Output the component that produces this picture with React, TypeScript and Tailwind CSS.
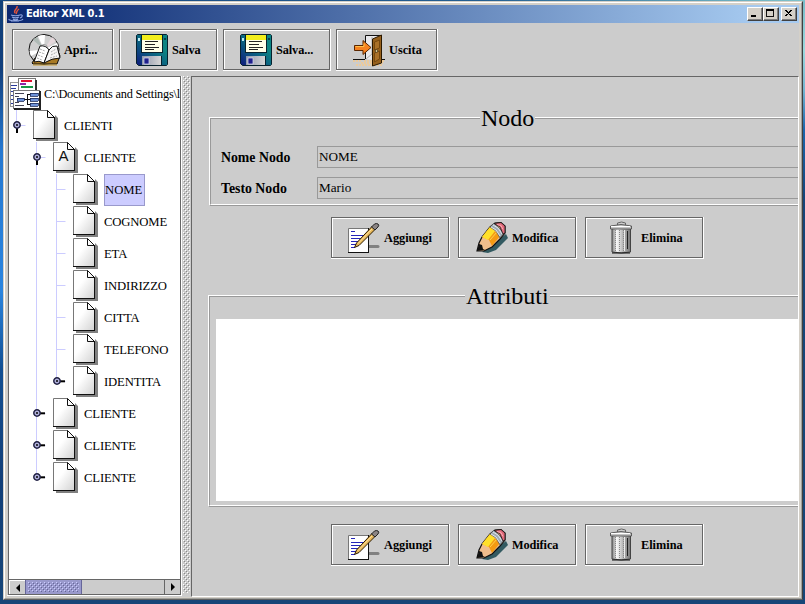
import React from 'react';

type IconProps = { className?: string };

const ICON = 'h-8 w-8 shrink-0 overflow-visible';

function JavaIcon() {
  return (
    <svg viewBox="0 0 16 16" className="h-4 w-4 shrink-0">
      <path d="M9 0C10 3 5 4 7 7M11 3C8 5 9 6 8 8" fill="none" stroke="#e2553d" strokeWidth="1.5" />
      <path d="M3 9c2 1 7 1 9 0M12 9c3-1 3 2 0 3M4 11c2 1 5 1 7 0M5 13c1 1 4 1 5 0M1 13c-1 2 12 3 14 0M3 15h8" fill="none" stroke="#8fa5e0" strokeWidth="1.1" />
    </svg>
  );
}

function OpenIcon() {
  return (
    <svg viewBox="0 0 32 32" className={ICON}>
      <circle cx="16" cy="15.5" r="15" fill="#cfcfcf" stroke="#111" />
      <path d="M16 15.5L10 2A15 15 0 0 1 17 1zM16 15.5L29 9A15 15 0 0 1 30.500 14zM16 15.500L3 22A15 15 0 0 1 1.500 17z" fill="#fff" />
      <path d="M16 15.500L5 6A14 14 0 0 1 9 3z" fill="#aeb9b5" />
      <path d="M16 15.500L24 3A14 14 0 0 1 28 7z" fill="#e6d8dc" />
      <circle cx="16" cy="14" r="3.500" fill="#eee" stroke="#999" />
      <path d="M4 29l3-5 13-2 11-3 1 3-3 8H5z" fill="#a87a24" stroke="#111" />
      <path d="M12 12q6-1 9 4l-5 13q-5-3-10-1z" fill="#fff" stroke="#111" />
      <path d="M21 16q3-5 8-4l3 12q-8 0-16 5z" fill="#f6f6f6" stroke="#111" />
      <path d="M12 15l5 2M11 18l6 2M10 21l5 2M9 24l5 2M23 18l5-3M23 21l6-3M22 24l7-2" stroke="#aaa" fill="none" strokeDasharray="2 1" />
      <path d="M5 31h24" stroke="#c99a2e" />
    </svg>
  );
}

function FloppyIcon() {
  return (
    <svg viewBox="0 0 32 32" className={ICON}>
      <defs>
        <linearGradient id="disk" x1="0" y1="1" x2="0.7" y2="0.3">
          <stop offset="0" stopColor="#10187c" />
          <stop offset="0.5" stopColor="#0b5580" />
          <stop offset="1" stopColor="#0c8483" />
        </linearGradient>
        <linearGradient id="shutter">
          <stop offset="0" stopColor="#8f98ac" />
          <stop offset="1" stopColor="#d5d5d5" />
        </linearGradient>
      </defs>
      <path d="M1.500 .5h29l1 1v29l-1 1h-28l-2-2v-28z" fill="url(#disk)" stroke="#07222e" />
      <rect x="5" y="1" width="22" height="18" fill="#07222e" />
      <rect x="6" y="1" width="20" height="5" fill="#f2ee1c" />
      <rect x="6" y="6" width="20" height="12" fill="#ffffe8" />
      <path d="M9 7.500h13M9 10.500h10M9 13.500h14M9 15.500h9" stroke="#222" />
      <rect x="2" y="4" width="2" height="3" fill="#bfeaf0" />
      <rect x="28" y="4" width="2" height="2" fill="#063f50" />
      <path d="M6 22h19v9H6z" fill="url(#shutter)" />
      <rect x="8" y="24" width="5" height="6" fill="#20208c" stroke="#dfe3f4" strokeWidth=".7" />
      <path d="M25.500 22v9" stroke="#07222e" />
    </svg>
  );
}

function ExitIcon() {
  return (
    <svg viewBox="0 0 32 32" className={ICON}>
      <path d="M11 27h21M8 29h22M0 27h9M3 31h26" stroke="#f5c98c" strokeWidth="1.500" strokeDasharray="2 1" />
      <path d="M0 25.500h12M28 25.500h4" stroke="#111" />
      <path d="M12.500 25V1.500h16V27" fill="#e9e9ec" stroke="#111" />
      <path d="M13 25l6-5V3" fill="none" stroke="#aaa" />
      <path d="M1.500 11.500H10v-5l8 7-8 7v-4H1.500z" fill="#f58220" stroke="#5a2600" />
      <path d="M2.500 12.500H11v-3" fill="none" stroke="#ffc04a" />
      <path d="M19.500 5l9-4v28l-9 3z" fill="#96601c" stroke="#2a1800" />
      <path d="M21.500 8l5-2v8l-5 2zM21.500 19l5-2v8l-5 3z" fill="#a97028" stroke="#74470f" />
      <circle cx="23.500" cy="17" r="1.200" fill="#ffe79a" stroke="#222" strokeWidth=".6" />
    </svg>
  );
}

function AddIcon() {
  return (
    <svg viewBox="0 0 32 32" className={ICON}>
      <path d="M21 24.500h10" stroke="#808080" strokeWidth="3" strokeLinecap="round" />
      <path d="M1.500 6.500h20v24h-20z" fill="#fff" stroke="#777" />
      <path d="M1 30.500h21M21.500 6v25" stroke="#111" />
      <path d="M4 9.500h4M4 13.500h14M4 16.500h12M4 19.500h11M4 22.500h8M4 25.500h4" stroke="#2424b8" />
      <path d="M7.500 25.500l2-4.500L25 4.500l3 3L12 23.500z" fill="#e8b85a" stroke="#2b1a00" />
      <path d="M11 21.500L25.500 6.500" stroke="#ffe3a0" />
      <path d="M24.500 5l3-3q2-1 3.500 0t0 3L28 8z" fill="#8b8585" stroke="#222" />
    </svg>
  );
}

function EditIcon() {
  return (
    <svg viewBox="0 0 32 32" className={ICON}>
      <path d="M6 30l6 1 8-3 12-12-2-4z" fill="#335a61" />
      <path d="M1 29l2-8 3-6L14 5l5-4 6-.5 4 3.500v7l-5 6-8 8-8 4z" fill="#f0bd8c" stroke="#111" strokeWidth="1.200" />
      <path d="M6 15l8-10 10 9-8 10-3-6z" fill="#f59a12" />
      <path d="M6 15l8-10 5 4-7 9z" fill="#ffe02a" />
      <path d="M14 18l7-8" stroke="#ffd34b" />
      <path d="M14 5l4-4 10 10-4 5-4-7z" fill="#9fabb5" stroke="#444" strokeWidth=".6" />
      <path d="M15 5l5 3 4 6M17 3l5 3 4 6" fill="none" stroke="#e9eef2" strokeWidth=".9" />
      <path d="M18 1.500l7-1 4 3.500v7l-2 1-3-7z" fill="#e2697a" stroke="#111" strokeWidth=".8" />
      <path d="M21 2.500l4 1 2 4" stroke="#f8aab3" fill="none" />
      <path d="M1 29l2-7 3 1 1 4 2 1z" fill="#111" />
    </svg>
  );
}

function TrashIcon() {
  return (
    <svg viewBox="0 0 32 32" className={ICON}>
      <defs>
        <linearGradient id="can">
          <stop offset="0" stopColor="#888" />
          <stop offset="0.3" stopColor="#f2f2f2" />
          <stop offset="0.6" stopColor="#b4b4b4" />
          <stop offset="1" stopColor="#777" />
        </linearGradient>
      </defs>
      <path d="M12.500 3V1q4-2 8 0v2" fill="none" stroke="#666" />
      <path d="M7 6h18.500v24q-9 2-18.500 0z" fill="url(#can)" stroke="#444" />
      <path d="M10.500 8v21M14.500 8v21M18.500 8v21" stroke="#888" strokeDasharray="1 1" />
      <path d="M11.500 8v21M19.500 8v21" stroke="#fff" strokeWidth=".8" />
      <path d="M22.500 9v18" stroke="#222" />
      <path d="M5.500 4q10.500-3 21 0v3h-21z" fill="#c4c4c4" stroke="#444" strokeWidth=".8" />
      <path d="M6 4.500h19" stroke="#fff" />
      <path d="M7 31h18" stroke="#111" fill="none" />
    </svg>
  );
}

function RootIcon() {
  return (
    <svg viewBox="0 0 32 32" className={ICON} shapeRendering="crispEdges">
      <path d="M1 4h10v24H1z" fill="#fff" stroke="#999" />
      <path d="M2 7.500h6M2 10.500h5M2 13.500h6M2 17.500h4M2 21.500h4M2 25.500h4" stroke="#2b3c9c" />
      <path d="M9.500 .5h17v14h-17z" fill="#fff" stroke="#777" />
      <path d="M27 2v12" stroke="#333" strokeWidth="2" />
      <path d="M12 3h11" stroke="#e01030" strokeWidth="2" />
      <path d="M11 6h6" stroke="#9028a8" strokeWidth="2" />
      <path d="M12 9h12" stroke="#189848" strokeWidth="2" />
      <path d="M4.500 12.500h26v18h-26z" fill="#fff" stroke="#777" />
      <path d="M5 31h27M31 13v18" stroke="#222" strokeWidth="2" />
      <path d="M6 15.500h9M6 18.500h4M6 24.500h4M6 27.500h9" stroke="#445" />
      <path d="M15 21.500h3M18.500 16v11M18 16.500h3M18 21.500h3M18 26.500h3" stroke="#111" fill="none" />
      <path d="M8 20h7v3H8zM21 15h8v3h-8zM21 20h8v3h-8zM21 25h8v3h-8z" fill="#6f93d8" stroke="#1b2b58" strokeWidth=".8" />
    </svg>
  );
}

function DocIcon({ letter }: { letter?: string }) {
  return (
    <svg viewBox="0 0 31 32" className="h-8 w-[31px] shrink-0">
      <defs>
        <linearGradient id="page" x1="0" y1="0" x2="1" y2="1">
          <stop offset="0.4" stopColor="#fff" />
          <stop offset="1" stopColor="#d2d2d2" />
        </linearGradient>
      </defs>
      <path d="M3 29h19V5l3 3v23H3z" fill="#808080" />
      <path d="M.5 .5h14l7 7v21H.5z" fill="url(#page)" stroke="#777" />
      <path d="M0 28.500h22M21.500 7v22M14.500 .5v7h7M14.500 .5l7 7" fill="none" stroke="#111" />
      {letter && (
        <text x="10.500" y="19" textAnchor="middle" fontSize="15" fontFamily="Liberation Sans, sans-serif" fill="#111">
          {letter}
        </text>
      )}
    </svg>
  );
}

type Node = { name: string; depth: number; handle?: 'open' | 'closed'; letter?: string; selected?: boolean; last?: boolean };

const NODES: Node[] = [
  { name: 'CLIENTI', depth: 1, handle: 'open' },
  { name: 'CLIENTE', depth: 2, handle: 'open', letter: 'A' },
  { name: 'NOME', depth: 3, selected: true },
  { name: 'COGNOME', depth: 3 },
  { name: 'ETA', depth: 3 },
  { name: 'INDIRIZZO', depth: 3 },
  { name: 'CITTA', depth: 3 },
  { name: 'TELEFONO', depth: 3 },
  { name: 'IDENTITA', depth: 3, handle: 'closed', last: true },
  { name: 'CLIENTE', depth: 2, handle: 'closed' },
  { name: 'CLIENTE', depth: 2, handle: 'closed' },
  { name: 'CLIENTE', depth: 2, handle: 'closed', last: true },
];

function Gutter({ node }: { node: Node }) {
  const width = node.depth * 20 + 4;
  const x = node.depth * 20 - 12.5;
  const end = node.last || node.depth === 1 ? 15 : 32;
  return (
    <svg width={width} height="32" className="shrink-0">
      <g stroke="#ccccff">
        {node.depth === 3 && <path d="M27.5 0V32" />}
        <path d={`M${x} 0V${end}M${x} 15.5H${x + 9}`} fill="none" />
      </g>
      {node.handle && (
        <g transform={`translate(${x + 0.5} 15)`}>
          {node.handle === 'open' ? (
            <path d="M0 3V8" stroke="#000" strokeWidth="2" />
          ) : (
            <path d="M3 .3H8" stroke="#000" strokeWidth="2" />
          )}
          <circle r="3.200" fill="#b4b4e0" stroke="#222244" strokeWidth="1.500" />
          <circle r="1.100" fill="#111" />
        </g>
      )}
    </svg>
  );
}

function TreeRow({ node }: { node: Node }) {
  return (
    <div className="flex h-8 shrink-0 items-center whitespace-nowrap">
      <Gutter node={node} />
      <DocIcon letter={node.letter} />
      <span
        className={
          node.selected
            ? 'flex h-8 w-[41px] items-center border border-[#9999cc] bg-[#ccccff] pt-px'
            : 'flex h-8 items-center pt-px tracking-[-0.15px]'
        }
      >
        {node.name}
      </span>
    </div>
  );
}

function Bumps({ id, dark, light, className }: { id: string; dark: string; light: string; className: string }) {
  return (
    <svg className={className} shapeRendering="crispEdges">
      <defs>
        <pattern id={id} width="4" height="4" patternUnits="userSpaceOnUse">
          <path d="M0 0h1v1h-1zM2 2h1v1h-1z" fill={light} />
          <path d="M1 1h1v1h-1zM3 3h1v1h-1z" fill={dark} />
        </pattern>
      </defs>
      <rect width="100%" height="100%" fill={`url(#${id})`} />
    </svg>
  );
}

function MetalButton({ icon, label, className }: { icon: React.ReactNode; label: string; className: string }) {
  return (
    <button className="flex h-[42px] shrink-0 border-r border-b border-white">
      <span className="flex border border-[#666666]">
        <span
          className={`flex h-[39px] items-center border-t border-l border-white text-left text-[12.3px] font-bold whitespace-nowrap ${className}`}
        >
          {icon}
          <span>{label}</span>
        </span>
      </span>
    </button>
  );
}

function ButtonRow({ className }: { className: string }) {
  return (
    <div className={`flex gap-2 pl-[139px] ${className}`}>
      <MetalButton icon={<AddIcon />} label="Aggiungi" className="w-[116px] gap-[5px] pl-[14px]" />
      <MetalButton icon={<EditIcon />} label="Modifica" className="w-[116px] gap-1 pl-4 tracking-[-0.1px]" />
      <MetalButton icon={<TrashIcon />} label="Elimina" className="w-[116px] gap-1 pl-[18px]" />
    </div>
  );
}

function Group({ title, className, titleClass, children }: { title: string; className: string; titleClass: string; children: React.ReactNode }) {
  return (
    <section className={`relative border-t border-b border-l border-white border-b-[#999999] ${className}`}>
      <div className="h-full border-t border-b border-l border-[#999999] border-b-white">{children}</div>
      <h2 className={`absolute -top-[14px] bg-[#cccccc] px-px text-[24px] leading-[29px] whitespace-nowrap ${titleClass}`}>{title}</h2>
    </section>
  );
}

function Field({ label, value }: { label: string; value: string }) {
  return (
    <div className="flex h-[22px] items-center">
      <label className="w-24 shrink-0 pt-[2px] text-[13.8px] font-bold">{label}</label>
      <div className="flex h-[22px] flex-1 items-center border border-r-0 border-[#999999] pl-px text-[13.2px]">{value}</div>
    </div>
  );
}

function WinButton({ children, className }: { children: React.ReactNode; className?: string }) {
  return (
    <div className={`h-[14px] w-4 border border-white border-r-[#404040] border-b-[#404040] bg-[#d4d0c8] ${className ?? ''}`}>
      <svg viewBox="0 0 14 12" className="h-3 w-[14px] border-r border-b border-[#808080]" shapeRendering="crispEdges">
        {children}
      </svg>
    </div>
  );
}

export default function App() {
  return (
    <div className="h-[604px] w-[805px] overflow-hidden bg-[linear-gradient(to_bottom,#124078_0px,#12407c_70px,#2678d0_150px,#2b85df_290px,#124f92_370px,#123f78_480px,#174678_604px)] font-['Liberation_Serif',serif] text-black">
      <div className="flex h-[604px] bg-[linear-gradient(to_bottom,#78bcc8_0px,#9cd8dc_50px,#74b5d0_90px,#1b65ac_130px,#154579_200px,#174678_604px)] bg-[length:3px_604px] bg-right bg-no-repeat">
        <div className="h-[604px] w-full bg-[linear-gradient(to_right,#174880,#235e90_60%,#80c4cc)] bg-[length:805px_1px] bg-no-repeat pt-px pl-[3px]">
          <main className="flex h-[599px] w-[800px] flex-col border border-[#d4d0c8] border-r-[#404040] border-b-[#606060] bg-[#d4d0c8]">
            <div className="flex min-h-0 flex-1 flex-col border border-white border-r-[#a0a09c] border-b-[#a0a09c] p-[2px] pb-[1px]">
              <header className="flex h-[18px] shrink-0 items-center bg-[linear-gradient(to_right,#0c2870,#16357b_10%,#a6caf0_95%)] pr-[2px] pl-px">
                <JavaIcon />
                <h1 className="flex-1 pt-px pl-[2px] font-['DejaVu_Sans_Condensed','DejaVu_Sans',sans-serif] text-[11px] font-bold tracking-[-0.25px] text-white">Editor XML 0.1</h1>
                <div className="flex">
                  <WinButton>
                    <path d="M3 8h6v2H3z" />
                  </WinButton>
                  <WinButton>
                    <path d="M2.500 2h8v7h-8zM2 2h9" fill="none" stroke="#000" />
                    <path d="M2 1h9v2H2z" />
                  </WinButton>
                  <WinButton className="ml-[2px]">
                    <path d="M3 2h2v1h1v1h2v-1h1v-1h2v1h-1v1h-1v1h-1v1h1v1h1v1h1v1h-2v-1h-1v-1h-2v1h-1v1h-2v-1h1v-1h1v-1h1v-1h-1v-1h-1v-1h-1z" />
                  </WinButton>
                </div>
              </header>

              <div className="flex min-h-0 flex-1 flex-col bg-[#cccccc]">
                <nav className="flex h-[53px] shrink-0 gap-[5px] pt-[6px] pl-[5px]">
                  <MetalButton icon={<OpenIcon />} label="Apri..." className="w-[99px] gap-1 pl-[14px] tracking-[-0.1px]" />
                  <MetalButton icon={<FloppyIcon />} label="Salva" className="w-[96px] gap-1 pl-[15px]" />
                  <MetalButton icon={<FloppyIcon />} label="Salva..." className="w-[105px] gap-1 pl-[15px] tracking-[-0.1px]" />
                  <MetalButton icon={<ExitIcon />} label="Uscita" className="w-[99px] gap-1 pl-[15px]" />
                </nav>

                <div className="flex min-h-0 flex-1">
                  <aside className="mb-px flex w-[175px] shrink-0 flex-col border-r border-b border-white pl-px">
                    <div className="flex min-h-0 flex-1 flex-col border border-[#666666]">
                      <div className="flex min-h-0 flex-1 flex-col overflow-hidden bg-white pt-px text-[12.7px]">
                        <div className="flex h-8 shrink-0 items-center whitespace-nowrap">
                          <RootIcon />
                          <span className="pl-[3px] text-[12.3px] tracking-[-0.2px]">C:\Documents and Settings\l</span>
                        </div>
                        {NODES.map((node, i) => (
                          <TreeRow key={i} node={node} />
                        ))}
                      </div>
                      <div className="flex h-[15px] shrink-0 border-t border-[#666666]">
                        <div className="flex w-4 items-center justify-center border-t border-l border-white">
                          <svg viewBox="0 0 4 8" className="h-2 w-1"><path d="M4 0v8L0 4z" /></svg>
                        </div>
                        <div className="w-[57px] border-r border-l border-[#666699] bg-[#9999cc]">
                          <Bumps id="thumb" light="#ccccff" dark="#666699" className="m-[2px] h-[10px] w-[51px]" />
                        </div>
                        <div className="flex-1" />
                        <div className="flex w-4 items-center justify-center border-l border-[#666666]">
                          <svg viewBox="0 0 4 8" className="h-2 w-1"><path d="M0 0v8l4-4z" /></svg>
                        </div>
                      </div>
                    </div>
                  </aside>

                  <div className="w-[9px] shrink-0 pl-px">
                    <Bumps id="divider" light="#ffffff" dark="#888888" className="h-[517px] w-[7px]" />
                  </div>

                  <div className="min-w-0 flex-1 border border-[#666666] border-r-white border-b-white">
                    <Group title="Nodo" className="mt-10 ml-[17px] h-[89px]" titleClass="left-[270px]">
                      <div className="flex flex-col gap-[9px] pt-[27px] pl-[10px]">
                        <Field label="Nome Nodo" value="NOME" />
                        <Field label="Testo Nodo" value="Mario" />
                      </div>
                    </Group>
                    <ButtonRow className="mt-[11px]" />
                    <Group title="Attributi" className="mt-9 ml-4 h-[212px]" titleClass="left-[256px]">
                      <div className="pt-[22px] pl-[6px]">
                        <div className="h-[182px] bg-white" />
                      </div>
                    </Group>
                    <ButtonRow className="mt-[17px]" />
                  </div>
                </div>
              </div>
            </div>
          </main>
        </div>
      </div>
    </div>
  );
}
